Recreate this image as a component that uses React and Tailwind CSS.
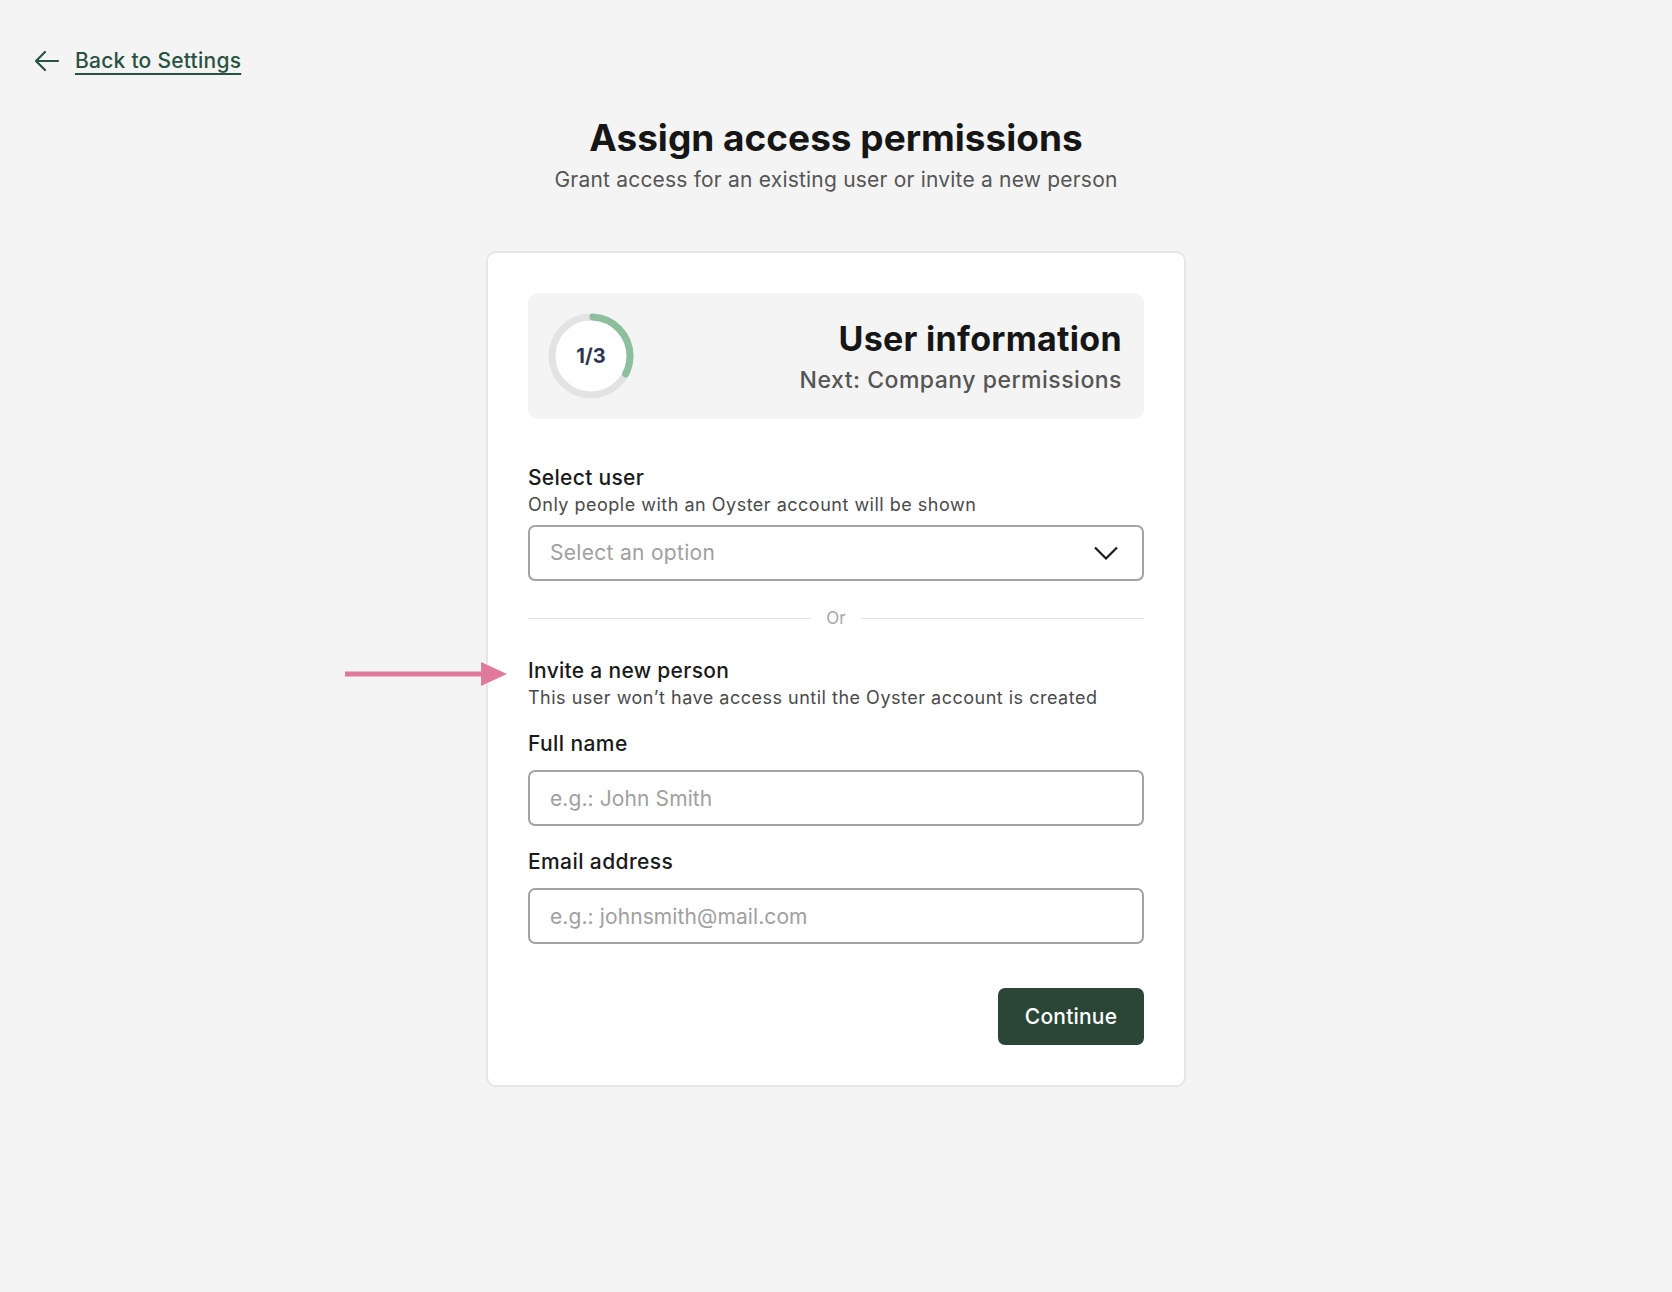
import React from 'react';

const ProgressRing = ({ step = 1, total = 3 }) => {
  const r = 39;
  const c = 2 * Math.PI * r;
  const done = c * (step / total);
  return (
    <div className="relative w-[86px] h-[86px] shrink-0">
      <svg width="86" height="86" viewBox="0 0 86 86" className="-rotate-90">
        <circle cx="43" cy="43" r={r} fill="#ffffff" stroke="#e3e3e3" strokeWidth="7" />
        <circle
          cx="43" cy="43" r={r} fill="none" stroke="#8cbf9b" strokeWidth="7"
          strokeLinecap="round" strokeDasharray={`${done - 4} ${c}`} strokeDashoffset="-2"
        />
      </svg>
      <span className="absolute inset-0 flex items-center justify-center text-[20px] font-bold text-[#2d3550]">
        {step}/{total}
      </span>
    </div>
  );
};

const Field = ({ label, placeholder }) => (
  <div className="flex flex-col">
    <label className="text-[21px] leading-[28px] font-medium tracking-[0.4px] text-[#1a1a1a]">{label}</label>
    <input
      placeholder={placeholder}
      className="mt-[12px] h-[56px] w-full rounded-[7px] border-2 border-[#a3a3a3] bg-white px-[20px] text-[21px] tracking-[0.1px] text-[#1a1a1a] placeholder:text-[#a0a0a0] outline-none"
    />
  </div>
);

export default function App() {
  return (
    <div className="min-h-screen bg-[#f4f4f4] font-['Inter',sans-serif] text-[#1a1a1a]">
      {/* Back link */}
      <div className="pt-[46px] pl-[34px]">
        <a href="#" className="inline-flex items-center gap-[15px] h-[30px] text-[#2a5240]">
          <svg width="26" height="22" viewBox="0 0 26 22" fill="none" stroke="#2a5240" strokeWidth="2.2" strokeLinecap="round" strokeLinejoin="round">
            <path d="M24 11H3" />
            <path d="M11 2 2 11l9 9" />
          </svg>
          <span className="text-[21px] leading-[30px] font-medium tracking-[0.25px] underline underline-offset-[5px] decoration-[2px]">Back to Settings</span>
        </a>
      </div>

      {/* Header */}
      <div className="mt-[38px] flex flex-col items-center text-center">
        <h1 className="text-[37px] leading-[44px] font-bold text-[#161616]">Assign access permissions</h1>
        <p className="mt-[6px] text-[21px] leading-[28px] tracking-[0.2px] text-[#555555]">Grant access for an existing user or invite a new person</p>
      </div>

      {/* Card */}
      <div className="relative mx-auto mt-[57px] w-[700px] rounded-[10px] border-2 border-[#e6e6e6] bg-white p-[40px]">
        {/* annotation arrow */}
        <svg className="absolute left-[-145px] top-[407px]" width="166" height="28" viewBox="0 0 166 28">
          <path d="M2 14H142" stroke="#df7a9d" strokeWidth="5" />
          <path d="M138 2 164 14 138 26Z" fill="#df7a9d" />
        </svg>

        <div className="flex h-[126px] items-center justify-between rounded-[10px] bg-[#f4f4f4] pl-[20px] pr-[22px]">
          <ProgressRing step={1} total={3} />
          <div className="flex flex-col items-end">
            <h2 className="text-[34px] leading-[40px] font-bold tracking-[0.3px] text-[#161616]">User information</h2>
            <p className="mt-[7px] text-[23px] leading-[28px] font-medium tracking-[0.5px] text-[#555555]">Next: Company permissions</p>
          </div>
        </div>

        <div className="mt-[45px]">
          <p className="text-[21px] leading-[28px] font-medium tracking-[0.3px]">Select user</p>
          <p className="mt-[1px] text-[18px] leading-[24px] tracking-[0.5px] text-[#4a4a4a]">Only people with an Oyster account will be shown</p>
          <button className="mt-[8px] flex h-[56px] w-full items-center justify-between rounded-[7px] border-2 border-[#a3a3a3] bg-white pl-[20px] pr-[24px]">
            <span className="text-[21px] tracking-[0.3px] text-[#a0a0a0]">Select an option</span>
            <svg width="24" height="14" viewBox="0 0 24 14" fill="none" stroke="#1a1a1a" strokeWidth="2.2">
              <path d="M1 1.5 12 12.5 23 1.5" />
            </svg>
          </button>
        </div>

        <div className="mt-[27px] flex h-[20px] items-center gap-[15px]">
          <div className="h-px flex-1 bg-[#e2e2e2]" />
          <span className="text-[17px] leading-[20px] text-[#a8a8a8]">Or</span>
          <div className="h-px flex-1 bg-[#e2e2e2]" />
        </div>

        <div className="mt-[29px]">
          <p className="text-[21px] leading-[28px] font-medium tracking-[0.3px]">Invite a new person</p>
          <p className="mt-[1px] text-[18px] leading-[24px] tracking-[0.5px] text-[#4a4a4a]">This user won’t have access until the Oyster account is created</p>
        </div>

        <div className="mt-[20px]">
          <Field label="Full name" placeholder="e.g.: John Smith" />
        </div>
        <div className="mt-[22px]">
          <Field label="Email address" placeholder="e.g.: johnsmith@mail.com" />
        </div>

        <div className="mt-[44px] flex justify-end">
          <button className="h-[57px] w-[146px] rounded-[7px] bg-[#2b4637] text-[21px] font-medium tracking-[0.2px] text-white">Continue</button>
        </div>
      </div>
    </div>
  );
}
